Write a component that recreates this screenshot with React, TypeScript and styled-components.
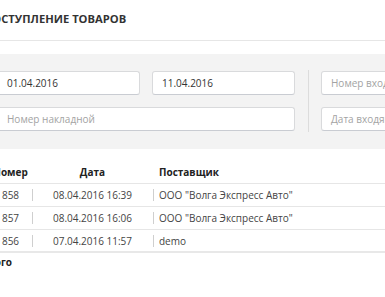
import React from "react";
import styled, { createGlobalStyle } from "styled-components";

const Global = createGlobalStyle`
  html, body { margin: 0; padding: 0; background: #fff; overflow: hidden; }
  body { font-family: "Open Sans", "Noto Sans", sans-serif; color: #333; }
  * { box-sizing: border-box; }
`;

const Page = styled.div`
  margin-left: -16px;
  width: 520px;
`;

const Header = styled.div`
  height: 41px;
  border-bottom: 1px solid #e6e6e6;
  display: flex;
  align-items: center;
  padding-bottom: 4px;
`;

const Title = styled.h1`
  margin: 0;
  font-size: 11.2px;
  font-weight: 700;
  color: #333;
  text-transform: uppercase;
  letter-spacing: 0;
`;

const Filters = styled.div`
  margin-top: 13px;
  background: #f3f3f3;
  height: 95px;
  padding: 17px 0 0 13px;
  display: flex;
  align-items: flex-start;
`;

const Column = styled.div<{ $w: number; $cols: number }>`
  flex: 0 0 ${(p) => p.$w}px;
  width: ${(p) => p.$w}px;
  display: grid;
  grid-template-columns: repeat(${(p) => p.$cols}, 1fr);
  column-gap: 12px;
  row-gap: 12px;
`;

const Divider = styled.div`
  flex: 0 0 1px;
  width: 1px;
  height: 62px;
  margin: -1px 12px 0 13px;
  background: #dcdcdc;
`;

const Field = styled.div<{ $span?: boolean; $placeholder?: boolean }>`
  grid-column: ${(p) => (p.$span ? "1 / span 2" : "auto")};
  height: 24px;
  background: #fff;
  border: 1px solid #d9dadc;
  border-bottom-color: #c9ccd2;
  border-radius: 3px;
  padding: 0 9px;
  display: flex;
  align-items: center;
  font-size: 10px;
  color: ${(p) => (p.$placeholder ? "#a3a3a3" : "#333")};
  white-space: nowrap;
  overflow: hidden;
`;

const Table = styled.div`
  margin-top: 14px;
  padding-left: 5px;
  font-size: 10px;
`;

const Row = styled.div<{ $head?: boolean; $last?: boolean }>`
  display: grid;
  grid-template-columns: 43px 121px 1fr;
  height: ${(p) => (p.$head ? "21px" : "23px")};
  align-items: center;
  border-bottom: ${(p) => (p.$last ? "2px solid #e8e8e8" : "1px solid #e6e6e6")};
  padding-bottom: ${(p) => (p.$head ? "2px" : "0")};
  font-weight: ${(p) => (p.$head ? 700 : 400)};
  color: ${(p) => (p.$head ? "#222" : "#444")};
`;

const Cell = styled.div<{ $align?: string; $sep?: boolean }>`
  position: relative;
  text-align: ${(p) => p.$align || "left"};
  padding-left: ${(p) => (p.$align === "left" ? "6px" : "0")};
  white-space: nowrap;
  &::before {
    content: "";
    display: ${(p) => (p.$sep ? "block" : "none")};
    position: absolute;
    left: 0;
    top: 50%;
    margin-top: -6px;
    width: 1px;
    height: 12px;
    background: #cfcfcf;
  }
`;

const Total = styled.div`
  margin: 1px 0 0 -3px;
  font-size: 10px;
  font-weight: 700;
  color: #222;
  height: 16px;
  display: flex;
  align-items: center;
`;

const rows = [
  { n: "858", d: "08.04.2016 16:39", s: 'ООО "Волга Экспресс Авто"' },
  { n: "857", d: "08.04.2016 16:06", s: 'ООО "Волга Экспресс Авто"' },
  { n: "856", d: "07.04.2016 11:57", s: "demo" },
];

export default function App() {
  return (
    <Page>
      <Global />
      <Header>
        <Title>Поступление товаров</Title>
      </Header>
      <Filters>
        <Column $w={298} $cols={2}>
          <Field>01.04.2016</Field>
          <Field>11.04.2016</Field>
          <Field $span $placeholder>
            Номер накладной
          </Field>
        </Column>
        <Divider />
        <Column $w={160} $cols={1}>
          <Field $placeholder>Номер входящего документа</Field>
          <Field $placeholder>Дата входящего документа</Field>
        </Column>
      </Filters>
      <Table>
        <Row $head>
          <Cell $align="center">Номер</Cell>
          <Cell $align="center">Дата</Cell>
          <Cell $align="left">Поставщик</Cell>
        </Row>
        {rows.map((r, i) => (
          <Row key={r.n} $last={i === rows.length - 1}>
            <Cell $align="center">{r.n}</Cell>
            <Cell $align="center" $sep>
              {r.d}
            </Cell>
            <Cell $align="left" $sep>
              {r.s}
            </Cell>
          </Row>
        ))}
      </Table>
      <Total>Итого</Total>
    </Page>
  );
}
